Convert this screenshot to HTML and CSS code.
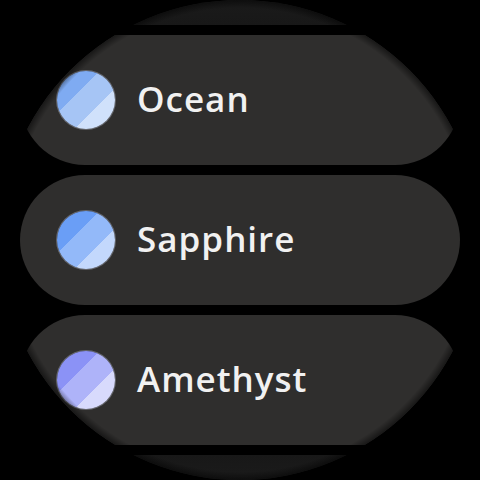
FILE: index.html
```html
<!DOCTYPE html>
<html>
<head>
<meta charset="utf-8">
<link rel="stylesheet" href="styles.css">
</head>
<body>
<div class="screen">
  <div class="list">
    <div class="chip chip--faded"></div>
    <div class="chip">
      <span class="swatch swatch--ocean"></span>
      <span class="label">Ocean</span>
    </div>
    <div class="chip">
      <span class="swatch swatch--sapphire"></span>
      <span class="label">Sapphire</span>
    </div>
    <div class="chip">
      <span class="swatch swatch--amethyst"></span>
      <span class="label">Amethyst</span>
    </div>
    <div class="chip chip--faded"></div>
  </div>
</div>
</body>
</html>
```

FILE: styles.css
```css
html, body {
  margin: 0;
  padding: 0;
  background: #000;
}

.screen {
  position: relative;
  width: 480px;
  height: 480px;
  border-radius: 50%;
  overflow: hidden;
  background: #000;
}

.screen::after {
  content: "";
  position: absolute;
  inset: 0;
  border-radius: 50%;
  background: radial-gradient(circle at 50% 50%, rgba(0,0,0,0) 232px, rgba(0,0,0,0.5) 240px);
  pointer-events: none;
}

.list {
  height: 480px;
  display: flex;
  flex-direction: column;
  justify-content: center;
  gap: 10px;
  padding: 0 20px;
}

.chip {
  flex: 0 0 130px;
  height: 130px;
  border-radius: 65px;
  background: #2f2e2d;
  display: flex;
  align-items: center;
  padding-left: 37px;
  gap: 22px;
  box-sizing: border-box;
}

.chip--faded {
  background: linear-gradient(#181818, #1f1f1f 50%, #181818);
}

.swatch {
  width: 58px;
  height: 58px;
  border-radius: 50%;
  flex: 0 0 58px;
  box-shadow: 0 0 0 1px rgba(230,236,255,0.3);
}

.swatch--ocean {
  background: linear-gradient(135deg, #7fabf2 0 37%, #a6c5f5 37% 65%, #d0e1fb 65% 100%);
}

.swatch--sapphire {
  background: linear-gradient(135deg, #6a9ef6 0 37%, #93b9f9 37% 65%, #c3d8fc 65% 100%);
}

.swatch--amethyst {
  background: linear-gradient(135deg, #8b92f6 0 37%, #aeb3f9 37% 65%, #d8dafc 65% 100%);
}

.label {
  font-family: "Open Sans", "Roboto", sans-serif;
  font-weight: 600;
  font-size: 35px;
  color: #f1f1f1;
  letter-spacing: 1px;
  line-height: 1;
  margin-top: -4px;
}
```
